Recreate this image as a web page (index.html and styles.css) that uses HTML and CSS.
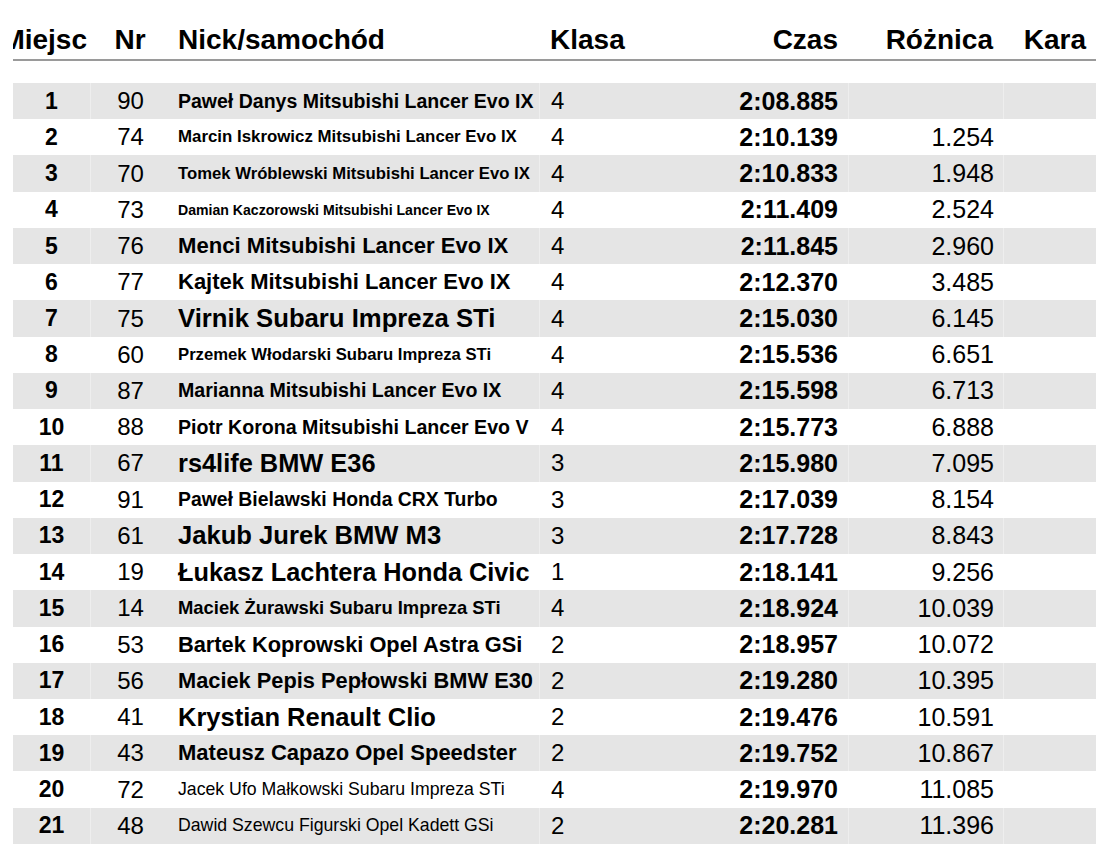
FILE: index.html
```html
<!DOCTYPE html>
<html lang="pl">
<head>
<meta charset="utf-8">
<title>Wyniki</title>
<link rel="stylesheet" href="styles.css">
</head>
<body>
<div class="board">
  <div class="head">
    <div class="h-place">Miejsc</div>
    <div class="h-nr">Nr</div>
    <div class="h-nick">Nick/samochód</div>
    <div class="h-class">Klasa</div>
    <div class="h-time">Czas</div>
    <div class="h-diff">Różnica</div>
    <div class="h-pen">Kara</div>
  </div>
  <div class="rows">
    <div class="row"><div class="place">1</div><div class="nr">90</div><div class="nick" style="font-size:19.5px">Paweł Danys Mitsubishi Lancer Evo IX</div><div class="cls">4</div><div class="time">2:08.885</div><div class="diff"></div><div class="pen"></div></div>
    <div class="row"><div class="place">2</div><div class="nr">74</div><div class="nick" style="font-size:16.85px">Marcin Iskrowicz Mitsubishi Lancer Evo IX</div><div class="cls">4</div><div class="time">2:10.139</div><div class="diff">1.254</div><div class="pen"></div></div>
    <div class="row"><div class="place">3</div><div class="nr">70</div><div class="nick" style="font-size:16.7px">Tomek Wróblewski Mitsubishi Lancer Evo IX</div><div class="cls">4</div><div class="time">2:10.833</div><div class="diff">1.948</div><div class="pen"></div></div>
    <div class="row"><div class="place">4</div><div class="nr">73</div><div class="nick" style="font-size:14.1px">Damian Kaczorowski Mitsubishi Lancer Evo IX</div><div class="cls">4</div><div class="time">2:11.409</div><div class="diff">2.524</div><div class="pen"></div></div>
    <div class="row"><div class="place">5</div><div class="nr">76</div><div class="nick" style="font-size:22.1px">Menci Mitsubishi Lancer Evo IX</div><div class="cls">4</div><div class="time">2:11.845</div><div class="diff">2.960</div><div class="pen"></div></div>
    <div class="row"><div class="place">6</div><div class="nr">77</div><div class="nick" style="font-size:22px">Kajtek Mitsubishi Lancer Evo IX</div><div class="cls">4</div><div class="time">2:12.370</div><div class="diff">3.485</div><div class="pen"></div></div>
    <div class="row"><div class="place">7</div><div class="nr">75</div><div class="nick" style="font-size:25.7px">Virnik Subaru Impreza STi</div><div class="cls">4</div><div class="time">2:15.030</div><div class="diff">6.145</div><div class="pen"></div></div>
    <div class="row"><div class="place">8</div><div class="nr">60</div><div class="nick" style="font-size:16.7px">Przemek Włodarski Subaru Impreza STi</div><div class="cls">4</div><div class="time">2:15.536</div><div class="diff">6.651</div><div class="pen"></div></div>
    <div class="row"><div class="place">9</div><div class="nr">87</div><div class="nick" style="font-size:19.6px">Marianna Mitsubishi Lancer Evo IX</div><div class="cls">4</div><div class="time">2:15.598</div><div class="diff">6.713</div><div class="pen"></div></div>
    <div class="row"><div class="place">10</div><div class="nr">88</div><div class="nick" style="font-size:19.6px">Piotr Korona Mitsubishi Lancer Evo V</div><div class="cls">4</div><div class="time">2:15.773</div><div class="diff">6.888</div><div class="pen"></div></div>
    <div class="row"><div class="place">11</div><div class="nr">67</div><div class="nick" style="font-size:25.4px">rs4life BMW E36</div><div class="cls">3</div><div class="time">2:15.980</div><div class="diff">7.095</div><div class="pen"></div></div>
    <div class="row"><div class="place">12</div><div class="nr">91</div><div class="nick" style="font-size:19.4px">Paweł Bielawski Honda CRX Turbo</div><div class="cls">3</div><div class="time">2:17.039</div><div class="diff">8.154</div><div class="pen"></div></div>
    <div class="row"><div class="place">13</div><div class="nr">61</div><div class="nick" style="font-size:25.6px">Jakub Jurek BMW M3</div><div class="cls">3</div><div class="time">2:17.728</div><div class="diff">8.843</div><div class="pen"></div></div>
    <div class="row"><div class="place">14</div><div class="nr">19</div><div class="nick" style="font-size:25.3px">Łukasz Lachtera Honda Civic</div><div class="cls">1</div><div class="time">2:18.141</div><div class="diff">9.256</div><div class="pen"></div></div>
    <div class="row"><div class="place">15</div><div class="nr">14</div><div class="nick" style="font-size:18.4px">Maciek Żurawski Subaru Impreza STi</div><div class="cls">4</div><div class="time">2:18.924</div><div class="diff">10.039</div><div class="pen"></div></div>
    <div class="row"><div class="place">16</div><div class="nr">53</div><div class="nick" style="font-size:21.8px">Bartek Koprowski Opel Astra GSi</div><div class="cls">2</div><div class="time">2:18.957</div><div class="diff">10.072</div><div class="pen"></div></div>
    <div class="row"><div class="place">17</div><div class="nr">56</div><div class="nick" style="font-size:21.8px">Maciek Pepis Pepłowski BMW E30</div><div class="cls">2</div><div class="time">2:19.280</div><div class="diff">10.395</div><div class="pen"></div></div>
    <div class="row"><div class="place">18</div><div class="nr">41</div><div class="nick" style="font-size:25.5px">Krystian Renault Clio</div><div class="cls">2</div><div class="time">2:19.476</div><div class="diff">10.591</div><div class="pen"></div></div>
    <div class="row"><div class="place">19</div><div class="nr">43</div><div class="nick" style="font-size:22px">Mateusz Capazo Opel Speedster</div><div class="cls">2</div><div class="time">2:19.752</div><div class="diff">10.867</div><div class="pen"></div></div>
    <div class="row"><div class="place">20</div><div class="nr">72</div><div class="nick nick-light" style="font-size:17.7px">Jacek Ufo Małkowski Subaru Impreza STi</div><div class="cls">4</div><div class="time">2:19.970</div><div class="diff">11.085</div><div class="pen"></div></div>
    <div class="row"><div class="place">21</div><div class="nr">48</div><div class="nick nick-light" style="font-size:17.7px">Dawid Szewcu Figurski Opel Kadett GSi</div><div class="cls">2</div><div class="time">2:20.281</div><div class="diff">11.396</div><div class="pen"></div></div>
  </div>
</div>
</body>
</html>
```

FILE: styles.css
```css
html, body {
  margin: 0;
  padding: 0;
  background: #ffffff;
}

body {
  font-family: "Liberation Sans", Arial, sans-serif;
  color: #000000;
}

.board {
  width: 1083px;
  margin-left: 13px;
}

.head,
.row {
  display: grid;
  grid-template-columns: 77px 80px 369px 161px 148px 155px 93px;
  align-items: center;
}

.head {
  height: 38px;
  margin-top: 21px;
  border-bottom: 2px solid #9a9a9a;
  margin-bottom: 22px;
  font-size: 28px;
  font-weight: 700;
  white-space: nowrap;
}

.head > div {
  overflow: hidden;
  line-height: 38px;
}

.h-place {
  text-align: right;
  padding-right: 3px;
  direction: rtl;
}

.h-nr {
  text-align: center;
}

.h-nick {
  padding-left: 8px;
}

.h-class {
  padding-left: 11px;
}

.h-time,
.h-diff,
.h-pen {
  text-align: right;
  padding-right: 10px;
}

.rows {
  display: flex;
  flex-direction: column;
}

.row {
  height: 36.24px;
  white-space: nowrap;
}

.row:nth-child(odd) {
  background: #e5e5e5;
}

.row > div {
  height: 100%;
  display: flex;
  align-items: center;
}

.nr,
.cls,
.diff,
.pen {
  border-left: 1px solid transparent;
}

.row:nth-child(odd) .nr,
.row:nth-child(odd) .cls,
.row:nth-child(odd) .diff,
.row:nth-child(odd) .pen {
  border-left-color: #eeeeee;
}

.place {
  justify-content: center;
  font-size: 23px;
  font-weight: 700;
}

.nr {
  justify-content: center;
  font-size: 24px;
}

.nick {
  padding-left: 8px;
  font-weight: 700;
  overflow: hidden;
}

.nick-light {
  font-weight: 400;
}

.cls {
  padding-left: 11px;
  font-size: 24px;
}

.time {
  justify-content: flex-end;
  padding-right: 10px;
  font-size: 25px;
  font-weight: 700;
}

.diff {
  justify-content: flex-end;
  padding-right: 9px;
  font-size: 25px;
}
```
